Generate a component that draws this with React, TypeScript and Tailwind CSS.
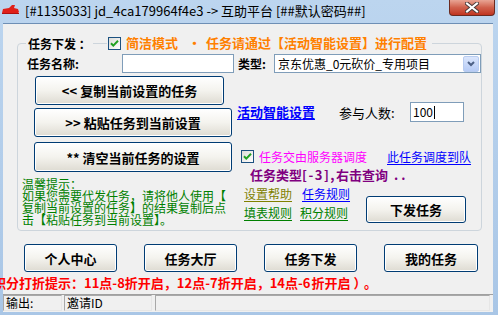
import React from 'react';

const cjk = "font-['Noto_Sans_CJK_SC','Liberation_Sans',sans-serif]";

function XpButton({ className = '', children }: { className?: string; children: React.ReactNode }) {
  return (
    <button
      className={`flex shrink-0 items-center justify-center rounded-[3px] border border-[#003c74] bg-linear-to-b from-white via-[#f4f3ee] to-[#dedbd2] text-[13px] font-bold leading-none text-black shadow-[inset_0_0_0_1px_#ffffff] ${className}`}
    >
      {children}
    </button>
  );
}

function CheckBox() {
  return (
    <span className="flex h-[13px] w-[13px] shrink-0 items-center justify-center border border-[#1c5180] bg-linear-to-br from-[#dcdcd7] to-white">
      <svg width="9" height="9" viewBox="0 0 9 9">
        <path d="M1 4.2 L3.3 6.6 L8 1.8" fill="none" stroke="#21a121" strokeWidth="2" />
      </svg>
    </span>
  );
}

export default function App() {
  return (
    <div className={`flex h-[315px] w-[498px] flex-col overflow-hidden bg-linear-to-b from-[#bcd5ef] to-[#a9c6e6] ${cjk}`}>
      {/* title bar */}
      <div className="flex h-[23px] shrink-0 items-start">
        <svg className="ml-[2px] mt-[4px]" width="17" height="10" viewBox="0 0 17 10">
          <path d="M0 9 L1 5 L7 4 L10 1 L13 1 L12 4 L16 5 L17 8 L16 9 Z" fill="#e0201a" />
          <path d="M0 9 L17 9 L17 10 L0 10 Z" fill="#b01010" />
        </svg>
        <span className="ml-[6px] mt-[3px] whitespace-nowrap text-[13px] leading-[16px] text-black">
          [#1135033] jd_4ca179964f4e3 -&gt; 互助平台 [##默认密码##]
        </span>
        <div className="ml-auto mr-[3px] flex h-[16px] w-[46px] items-center justify-center rounded-b-[4px] border border-t-0 border-[#6b2a20] bg-linear-to-b from-[#e8a494] via-[#d0604c] to-[#c0331f]">
          <svg width="14" height="11" viewBox="0 0 14 11">
            <path d="M2 1.5 L12 9.5 M12 1.5 L2 9.5" stroke="#4a3a3a" strokeWidth="4" strokeLinecap="square" />
            <path d="M2 1.5 L12 9.5 M12 1.5 L2 9.5" stroke="#ffffff" strokeWidth="2" strokeLinecap="square" />
          </svg>
        </div>
      </div>

      {/* client area */}
      <div className="ml-[3px] flex h-[289px] w-[490px] shrink-0 flex-col border-t border-[#6e8fb5] bg-[#f0f0f0] text-[12px] leading-[12px] text-black">
        {/* group box */}
        <div className="relative ml-[14px] mt-[19px] h-[188px] w-[465px] shrink-0 rounded-[4px] border border-[#cdd5dc]">
          <div className="absolute left-[8px] top-[-7px] bg-[#f0f0f0] px-[2px] font-semibold leading-[13px]">任务下发 ：</div>
          <div className="absolute left-[89px] top-[-8px] flex h-[14px] items-center bg-[#f0f0f0] pl-[1px] pr-[5px] text-[13px] font-bold leading-[14px] text-[#ff8000]">
            <CheckBox />
            <span className="ml-[5px]">简洁模式</span>
            <span className="ml-[10px] w-[18px]">·</span>
            <span>任务请通过【活动智能设置】进行配置</span>
          </div>

          {/* name / type row */}
          <div className="ml-[9px] mt-[10px] flex h-[19px] items-center">
            <span className="w-[95px] font-semibold">任务名称:</span>
            <div className="h-[19px] w-[112px] border border-[#7f9db9] bg-white" />
            <span className="ml-[4px] w-[36px] font-semibold">类型:</span>
            <div className="flex h-[19px] w-[207px] items-center border border-[#7f9db9] bg-white pl-[3px] pr-px">
              <span className="flex-1 whitespace-nowrap">京东优惠_0元砍价_专用项目</span>
              <span className="flex h-[16px] w-[16px] items-center justify-center rounded-[2px] border border-[#b8ccf0] bg-linear-to-b from-[#dbe6fc] to-[#b6cbf5]">
                <svg width="8" height="6" viewBox="0 0 8 6">
                  <path d="M1 1 L4 4 L7 1" fill="none" stroke="#4d6185" strokeWidth="2" />
                </svg>
              </span>
            </div>
          </div>

          <div className="flex">
            {/* left column */}
            <div className="ml-[16px] mt-[3px] flex w-[198px] flex-col">
              <XpButton className="ml-px h-[29px] w-[189px]">&lt;&lt; 复制当前设置的任务</XpButton>
              <XpButton className="mt-[3px] h-[29px] w-[198px]">&gt;&gt; 粘贴任务到当前设置</XpButton>
              <XpButton className="mt-[5px] h-[30px] w-[198px]">** 清空当前任务的设置</XpButton>
              <div className="ml-[-12px] mt-[6px] flex flex-col whitespace-nowrap text-[#008000]">
                <span className="h-[12px] leading-[12px]">温馨提示：</span>
                <span className="h-[12px] leading-[12px]">如果您需要代发任务，请将他人使用【</span>
                <span className="h-[12px] leading-[12px]">复制当前设置的任务】的结果复制后点</span>
                <span className="h-[12px] leading-[12px]">击【粘贴任务到当前设置】。</span>
              </div>
            </div>

            {/* right column */}
            <div className="ml-[5px] flex w-[244px] flex-col">
              <div className="mt-[29px] flex h-[20px] items-center">
                <span className="w-[102px] text-[13px] font-bold text-[#0000ff] underline underline-offset-2">活动智能设置</span>
                <span className="w-[71px] text-[13px] leading-[13px]">参与人数:</span>
                <div className="flex h-[20px] w-[54px] items-center border border-[#7f9db9] bg-white pl-[2px] text-[12px]">
                  100<span className="ml-px h-[13px] w-px bg-black" />
                </div>
              </div>
              <div className="mt-[28px] flex h-[13px] items-center">
                <span className="ml-[4px]">
                  <CheckBox />
                </span>
                <span className="ml-[5px] w-[128px] whitespace-nowrap text-[#ff00ff]">任务交由服务器调度</span>
                <span className="whitespace-nowrap text-[#0000ff] underline underline-offset-2">此任务调度到队</span>
              </div>
              <div className="ml-[13px] mt-[5px] h-[14px] whitespace-nowrap text-[13px] font-bold leading-[14px] text-[#800080]">
                任务类型<span className="tracking-[1.5px]">[-3],</span>右击查询<span className="ml-[6px] tracking-[3px]">..</span>
              </div>
              <div className="flex items-start">
                <div className="ml-[7px] mt-[6px] flex w-[122px] flex-col">
                  <div className="flex h-[12px]">
                    <span className="w-[58px] text-[#808000] underline underline-offset-2">设置帮助</span>
                    <span className="text-[#0000ff] underline underline-offset-2">任务规则</span>
                  </div>
                  <div className="mt-[7px] flex h-[12px]">
                    <span className="w-[56px] text-[#008000] underline underline-offset-2">填表规则</span>
                    <span className="text-[#008000] underline underline-offset-2">积分规则</span>
                  </div>
                </div>
                <XpButton className="mt-[14px] h-[27px] w-[100px]">下发任务</XpButton>
              </div>
            </div>
          </div>
        </div>

        {/* bottom buttons */}
        <div className="ml-[21px] mt-[13px] flex h-[28px] shrink-0 gap-[27px]">
          <XpButton className="h-[28px] w-[93px]">个人中心</XpButton>
          <XpButton className="h-[28px] w-[93px]">任务大厅</XpButton>
          <XpButton className="h-[28px] w-[93px]">任务下发</XpButton>
          <XpButton className="h-[28px] w-[94px]">我的任务</XpButton>
        </div>

        <div className="ml-[-10px] mt-[4px] h-[14px] shrink-0 whitespace-nowrap text-[13px] font-bold leading-[14px] text-[#ff0000]">
          积分打折提示：11点-8折开启，12点-7折开启，14点-<span className="tracking-[1px]">6</span>折开启<span className="ml-[3px] tracking-[4px]">）。</span>
        </div>

        <div className="mt-[4px] h-px w-full shrink-0 bg-[#a0a0a0]" />

        {/* status bar */}
        <div className="flex h-[16px] shrink-0">
          <div className="flex w-[59px] items-center border border-b-[#e6e6e6] border-l-[#a8a8a8] border-r-[#e6e6e6] border-t-[#a8a8a8] pl-[2px]">输出:</div>
          <div className="ml-[2px] flex w-[88px] items-center border border-b-[#e6e6e6] border-l-[#a8a8a8] border-r-[#e6e6e6] border-t-[#a8a8a8] pl-[2px]">邀请ID</div>
          <div className="ml-[3px] w-[335px] border border-b-[#e6e6e6] border-l-[#a8a8a8] border-r-[#e6e6e6] border-t-[#a8a8a8]" />
        </div>
      </div>
    </div>
  );
}
